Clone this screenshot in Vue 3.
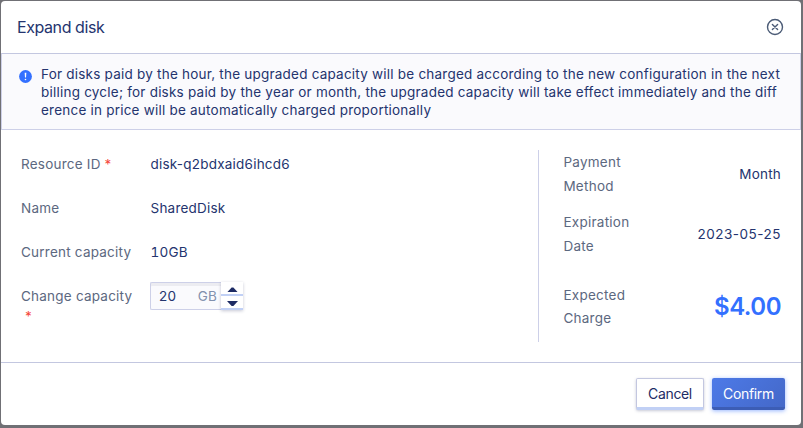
<script setup>
import { ref } from 'vue'

const capacity = ref(20)
const notice = [
  'For disks paid by the hour, the upgraded capacity will be charged according to the new configuration in the next',
  'billing cycle; for disks paid by the year or month, the upgraded capacity will take effect immediately and the diff',
  'erence in price will be automatically charged proportionally',
]
const fields = [
  { label: 'Resource ID', value: 'disk-q2bdxaid6ihcd6', required: true },
  { label: 'Name', value: 'SharedDisk' },
  { label: 'Current capacity', value: '10GB', numeric: true },
]
const summary = [
  { label: ['Payment', 'Method'], value: 'Month' },
  { label: ['Expiration', 'Date'], value: '2023-05-25', date: true },
]
</script>

<template>
  <div class="backdrop">
    <section class="modal">
      <header class="header">
        <h1 class="title">Expand disk</h1>
        <svg class="close" viewBox="0 0 18 18" fill="none" stroke="#4b5b76" stroke-width="1.4">
          <circle cx="9" cy="9" r="7.5" />
          <path d="M6.4 6.4l5.2 5.2M11.6 6.4l-5.2 5.2" stroke-linecap="round" />
        </svg>
      </header>

      <div class="alert">
        <svg class="info" viewBox="0 0 13 13">
          <circle cx="6.5" cy="6.5" r="6.4" fill="#3370ff" />
          <path d="M5.7 2.7h1.6l-.3 4.9H6z" fill="#fff" />
          <circle cx="6.5" cy="9.5" r=".8" fill="#fff" />
        </svg>
        <div class="notice">
          <div v-for="line in notice" :key="line">{{ line }}</div>
        </div>
      </div>

      <main class="body">
        <div class="form">
          <div v-for="f in fields" :key="f.label" class="field">
            <span class="label">{{ f.label }}<i v-if="f.required" class="star inline">*</i></span>
            <span class="value" :class="{ numeric: f.numeric }">{{ f.value }}</span>
          </div>
          <div class="field">
            <span class="label">Change capacity<i class="star below">*</i></span>
            <div class="stepper">
              <div class="input"><span>{{ capacity }}</span><span class="unit">GB</span></div>
              <div class="arrows">
                <button class="arrow" @click="capacity++">
                  <svg viewBox="0 0 10 5"><path d="M0 5L4.2.5h1.6L10 5z" fill="#1d2b64" /></svg>
                </button>
                <button class="arrow" @click="capacity--">
                  <svg viewBox="0 0 10 5"><path d="M0 0l4.2 4.5h1.6L10 0z" fill="#1d2b64" /></svg>
                </button>
              </div>
            </div>
          </div>
        </div>

        <aside class="summary">
          <div v-for="s in summary" :key="s.value" class="item">
            <div class="item-label"><div v-for="w in s.label" :key="w">{{ w }}</div></div>
            <span class="item-value" :class="{ date: s.date }">{{ s.value }}</span>
          </div>
          <div class="item charge">
            <div class="item-label"><div>Expected</div><div>Charge</div></div>
            <strong class="price">$4.00</strong>
          </div>
        </aside>
      </main>

      <footer class="footer">
        <button class="btn cancel">Cancel</button>
        <button class="btn confirm">Confirm</button>
      </footer>
    </section>
  </div>
</template>

<style>
body { background: #6f6f74; }
</style>

<style scoped>
* { box-sizing: border-box; }
.backdrop {
  width: 803px;
  height: 428px;
  padding: 1px 2px 3px 1px;
  background: #707075;
  font-family: Inter, sans-serif;
  font-size: 13.5px;
  letter-spacing: 0.22px;
  color: #24346e;
}
.modal {
  display: flex;
  flex-direction: column;
  height: 424px;
  background: #fff;
  border-radius: 4px;
  overflow: hidden;
}
.header {
  display: flex;
  align-items: center;
  justify-content: space-between;
  height: 52px;
  padding: 0 17px 0 16px;
}
.title { margin: 0; font-size: 16px; font-weight: 400; line-height: 24px; letter-spacing: -0.42px; }
.close { width: 18px; height: 18px; }
.alert {
  display: flex;
  height: 77px;
  padding: 11px 0 0 17px;
  gap: 9px;
  background: #fafafd;
  border: 1px solid #cdd0e8;
  border-top-color: #c3c7e0;
}
.info { flex: none; width: 13px; height: 13px; margin-top: 5px; }
.notice { line-height: 18px; white-space: nowrap; }
.body { display: flex; height: 232px; padding-top: 20px; }
.form { width: 537px; padding-left: 20px; }
.field { display: flex; height: 44px; }
.label { width: 129.5px; line-height: 28px; color: #5c6880; white-space: nowrap; }
.value { line-height: 28px; }
.numeric { font-variant-numeric: tabular-nums; }
.star { color: #f5483b; font-style: normal; }
.inline { margin-left: 4px; }
.below { display: block; margin-left: 4px; line-height: 12px; }
.stepper { display: flex; height: 28px; margin-left: -0.5px; }
.input {
  display: flex;
  justify-content: space-between;
  width: 71px;
  height: 28px;
  padding: 0 4px 0 8px;
  line-height: 26px;
  background: #fafafd;
  border: 1px solid #cdd0e8;
  border-right: 0;
  border-radius: 2px 0 0 2px;
  box-shadow: inset 0 3px 0 #ececf1;
}
.unit { color: #8190ad; }
.arrows { width: 22px; height: 28px; box-shadow: 0 1px 3px rgba(30, 40, 90, 0.25); }
.arrow {
  display: flex;
  align-items: center;
  justify-content: center;
  width: 22px;
  height: 14px;
  padding: 3px 0 0;
  border: 0;
  background: #fff;
  border-bottom: 2px solid #c1d0f5;
}
.arrow svg { width: 11px; height: 5.5px; }
.summary { width: 243px; height: 192px; padding-left: 24px; border-left: 1px solid #cdd0e8; }
.item { display: flex; align-items: center; justify-content: space-between; height: 48px; margin-bottom: 12px; }
.item-label { padding-left: 0.4px; line-height: 24px; color: #5c6880; letter-spacing: 0.26px; }
.item-value { padding-bottom: 1px; }
.date { letter-spacing: 0.5px; }
.charge { margin-top: 26px; height: 46px; }
.charge .item-label { line-height: 23px; }
.price { padding-bottom: 1px; font-size: 24px; font-weight: 600; color: #3370ff; letter-spacing: -0.5px; }
.footer {
  display: flex;
  justify-content: flex-end;
  gap: 8px;
  height: 63px;
  padding: 15px 16px 0 0;
  border-top: 1px solid #c3c7e0;
}
.btn { height: 32px; padding: 1px 0 0; font-family: inherit; font-size: 14px; letter-spacing: -0.35px; border-radius: 2px; }
.cancel {
  width: 68px;
  color: #1d2b64;
  background: #fff;
  border: 1px solid #c3c7e0;
  border-bottom: 3px solid #c1d0f5;
  box-shadow: 0 1px 3px rgba(30, 40, 90, 0.25);
}
.confirm {
  width: 73px;
  color: #fff;
  background: linear-gradient(135deg, #4d7ae8, #4468c8);
  border: 0;
  border-bottom: 3px solid #3c5db5;
  box-shadow: 0 1px 4px rgba(51, 112, 255, 0.5);
}
</style>
